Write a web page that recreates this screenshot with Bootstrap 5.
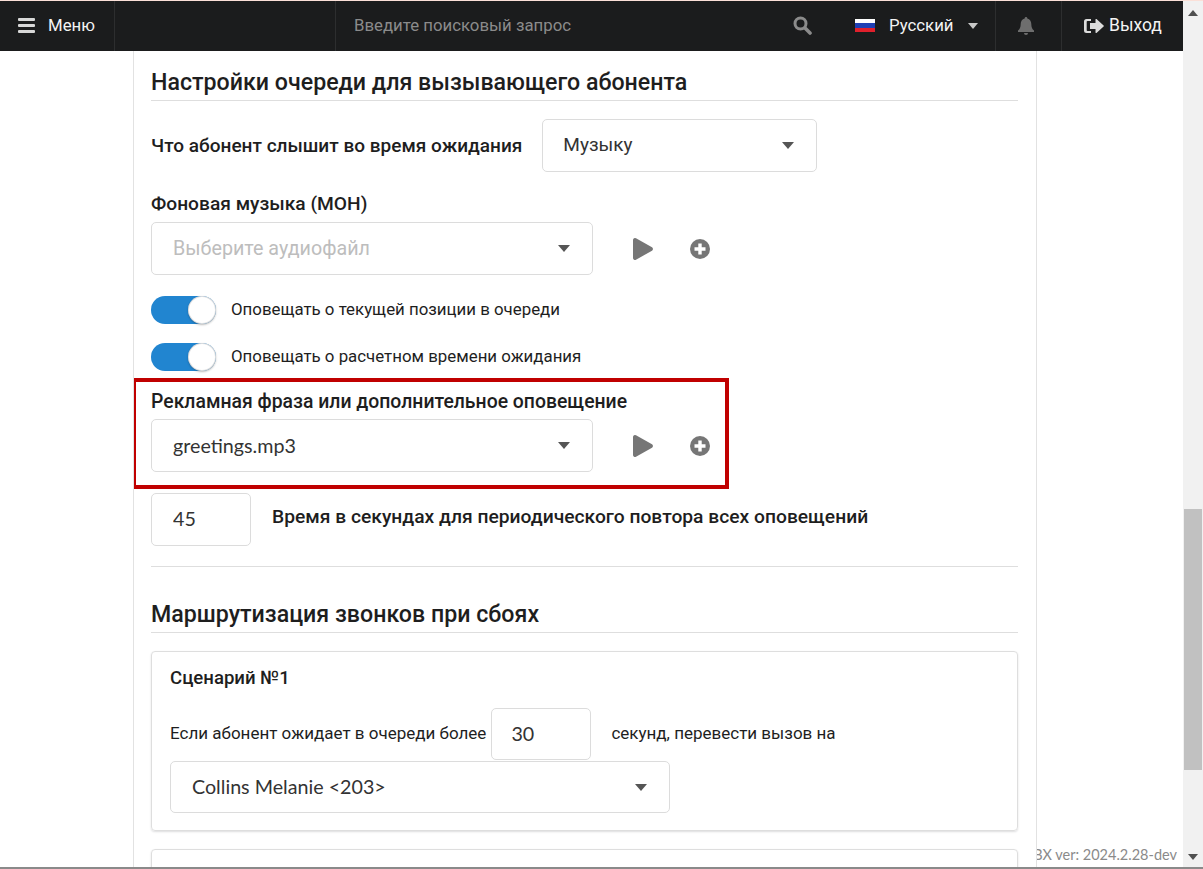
<!DOCTYPE html>
<html lang="ru">
<head>
  <meta charset="UTF-8">
  <meta name="viewport" content="width=device-width, initial-scale=1">
  <title>Настройки очереди</title>
  <link href="https://cdn.jsdelivr.net/npm/bootstrap@5.3.0/dist/css/bootstrap.min.css" rel="stylesheet">
  <style>
    html, body { height: 100%; }
    body { font-family: Roboto, "Liberation Sans", sans-serif; color: #1e1e1e; overflow: hidden; border-top: 1px solid #fbe0d8; border-bottom: 2px solid #8a8a8a; background: #fff; }
    .topbar { height: 50px; background: #1b1c1d; color: #f4f4f4; font-size: 16.8px; flex: none; }
    .topcell { height: 100%; display: flex; align-items: center; border-right: 1px solid #2d2e2f; flex: none; padding-bottom: 1px; }
    .cell-menu { width: 115px; padding-left: 18px; gap: 13px; }
    .cell-gap { width: 221px; }
    .cell-search { width: 505px; padding-left: 18px; color: #8b8b8b; justify-content: space-between; padding-right: 29px; border-right: 0; }
    .cell-lang { width: 155px; padding-left: 14px; border-right: 1px solid #2d2e2f; gap: 14px; }
    .cell-bell { width: 66px; justify-content: center; padding-right: 5px; }
    .cell-exit { flex: 1 1 auto; border-right: 0; padding-left: 22px; gap: 5px; font-size: 17.5px; }
    .flag-ru { width: 20px; height: 13px; background: linear-gradient(#fff 33%, #1f3fb4 33%, #1f3fb4 66%, #e0202c 66%); }
    .caret-down { width: 0; height: 0; border-left: 5.5px solid transparent; border-right: 5.5px solid transparent; border-top: 6px solid #c8c8c8; }
    .side-gutter { width: 133px; flex: none; }
    .main-panel { width: 904px; flex: none; border-left: 1px solid #e2e2e2; border-right: 1px solid #e2e2e2; padding: 18px 18px 0 17px; overflow: hidden; }
    .right-gutter { font-family: Lato, sans-serif; font-size: 14.5px; color: #8a8a8a; white-space: nowrap; overflow: hidden; min-width: 0; padding: 0 6px 1px 0; }
    .fake-scroll { width: 20px; flex: none; background: #f1f1f1; }
    .scroll-thumb { width: 18px; height: 261px; margin: 0 auto; background: #c1c1c1; }
    .arrow-up, .arrow-down { width: 0; height: 0; border-left: 5px solid transparent; border-right: 5px solid transparent; }
    .arrow-up { border-bottom: 6px solid #505050; margin: 9px auto 0; }
    .arrow-down { border-top: 6px solid #505050; margin: 0 auto 7px; }
    .scroll-rest { height: 493px; }
    .sec-title { font-size: 23.2px; font-weight: 500; line-height: 26px; margin: 0; padding-bottom: 5px; border-bottom: 1px solid #dedede; }
    .fld-label { font-size: 19.2px; font-weight: 500; line-height: 22px; }
    .fld-first { font-size: 19.05px; }
    .fld-wide { font-size: 19.4px; }
    .fld-raised { font-size: 19.25px; padding-bottom: 5px; }
    .dd-select, .num-input { font-family: Lato, Roboto, sans-serif; height: 53px; font-size: 19.7px; color: #333; border: 1px solid #dcdcdc; border-radius: 5px; box-shadow: none; }
    .dd-select { padding: 0 40px 0 21px; background-position: right 22px center; background-size: 12px 7px; background-image: url("data:image/svg+xml,%3Csvg xmlns='http://www.w3.org/2000/svg' viewBox='0 0 12 7'%3E%3Cpath fill='%23555' d='M0 0h12L6 7z'/%3E%3C/svg%3E"); }
    .dd-empty { color: #bdbdbd; font-family: Roboto, sans-serif; }
    .dd-rus { font-family: Roboto, sans-serif; font-size: 19px; padding-left: 20px; }
    .w-queue { width: 275px; }
    .w-file { width: 442px; }
    .w-dest { width: 500px; height: 52px; }
    .num-input { width: 100px; padding: 0 21px 2px; }
    .num-small { height: 52px; margin: 0 20px 0 5px; padding-left: 19px; }
    .act-icon { color: #767676; }
    .tgl { display: block; width: 65px; height: 28px; border-radius: 14px; background: #2185d0; position: relative; flex: none; }
    .tgl::after { content: ""; position: absolute; right: 0; top: 0; width: 28px; height: 28px; border-radius: 50%; background: #fff; box-shadow: 0 1px 2px rgba(34,36,38,.3), inset 0 0 0 1px rgba(34,36,38,.15); }
    .tgl-text { font-size: 16.85px; }
    .red-frame { position: absolute; left: -19px; top: -13px; width: 597px; height: 111px; border: 4px solid #c00000; pointer-events: none; }
    .rule-line { border-top: 1px solid #dedede; }
    .scen-card { border: 1px solid #dedede; border-radius: 4px; box-shadow: 0 1px 2px rgba(34,36,38,.15); padding: 15px 18px 17px; }
    .scen-title { font-size: 18.6px; font-weight: 500; line-height: 22px; }
    .scen-text { font-size: 17px; padding-bottom: 1px; }
  </style>
</head>
<body class="d-flex">

<div class="flex-grow-1 d-flex flex-column" style="min-width:0">
  <div class="topbar d-flex align-items-center">
    <div class="topcell cell-menu">
      <svg width="17" height="15" viewBox="0 0 17 15" fill="#d8d8d8"><rect y="0" width="17" height="3" rx="1"/><rect y="6" width="17" height="3" rx="1"/><rect y="12" width="17" height="3" rx="1"/></svg>
      <span>Меню</span>
    </div>
    <div class="topcell cell-gap"></div>
    <div class="topcell cell-search">
      <span>Введите поисковый запрос</span>
      <svg width="19" height="19" viewBox="0 0 19 19" fill="none" stroke="#8b8b8b"><circle cx="7.5" cy="7.5" r="5.5" stroke-width="3"/><path d="M12 12l5 5" stroke-width="3.6" stroke-linecap="round"/></svg>
    </div>
    <div class="topcell cell-lang">
      <span class="flag-ru"></span>
      <span>Русский</span>
      <span class="caret-down"></span>
    </div>
    <div class="topcell cell-bell">
      <svg width="16" height="18" viewBox="0 0 16 18" fill="#6e6e6e"><path d="M8 0a1.3 1.3 0 0 1 1.3 1.4C12 2 13.3 4.2 13.3 7c0 3.6 1 5 2.7 6.6V15H0v-1.4C1.7 12 2.7 10.600 2.700 7c0-2.800 1.300-5 4-5.600A1.300 1.300 0 0 1 8 0z"/><path d="M6 16h4a2 2 0 0 1-4 0z"/></svg>
    </div>
    <div class="topcell cell-exit">
      <svg width="20" height="16" viewBox="0 0 20 16" fill="#dcdcdc"><path d="M2.500 1H7v2H3.500a.8.800 0 0 0-.8.800v8.400a.8.800 0 0 0 .8.800H7v2H2.500A2.500 2.500 0 0 1 0 12.500v-9A2.500 2.500 0 0 1 2.500 1z"/><path d="M11.500 1.500a.6.600 0 0 1 1 -.4L19.600 7.500a.7.700 0 0 1 0 1L12.500 14.900a.6.600 0 0 1-1-.4V11H6V5h5.500z"/></svg>
      <span>Выход</span>
    </div>
  </div>

  <div class="flex-grow-1 d-flex" style="min-height:0">
    <div class="side-gutter"></div>
    <div class="main-panel">
      <h2 class="sec-title">Настройки очереди для вызывающего абонента</h2>

      <div class="d-flex align-items-center" style="gap:20px;margin-top:18px">
        <span class="fld-label fld-first">Что абонент слышит во время ожидания</span>
        <select class="form-select dd-select dd-rus w-queue"><option>Музыку</option></select>
      </div>

      <div class="fld-label" style="margin-top:21px;margin-bottom:7px">Фоновая музыка (МОН)</div>
      <div class="d-flex align-items-center">
        <select class="form-select dd-select dd-empty w-file"><option>Выберите аудиофайл</option></select>
        <svg class="act-icon" style="margin-left:40px" width="20" height="22" viewBox="0 0 20 22" fill="currentColor"><path d="M0 2a2 2 0 0 1 3-1.700l16 9a2 2 0 0 1 0 3.400l-16 9A2 2 0 0 1 0 20z"/></svg>
        <svg class="act-icon" style="margin-left:37px" width="20" height="20" viewBox="0 0 20 20"><circle cx="10" cy="10" r="10" fill="currentColor"/><path d="M10 4.500v11M4.500 10h11" stroke="#fff" stroke-width="3.400"/></svg>
      </div>

      <div class="d-flex align-items-center" style="gap:15px;margin-top:21px">
        <span class="tgl"></span><span class="tgl-text">Оповещать о текущей позиции в очереди</span>
      </div>
      <div class="d-flex align-items-center" style="gap:15px;margin-top:19px">
        <span class="tgl"></span><span class="tgl-text">Оповещать о расчетном времени ожидания</span>
      </div>

      <div class="position-relative" style="margin-top:20px">
        <span class="red-frame"></span>
        <div class="fld-label fld-wide" style="margin-bottom:6px">Рекламная фраза или дополнительное оповещение</div>
        <div class="d-flex align-items-center">
          <select class="form-select dd-select w-file"><option>greetings.mp3</option></select>
          <svg class="act-icon" style="margin-left:40px" width="20" height="22" viewBox="0 0 20 22" fill="currentColor"><path d="M0 2a2 2 0 0 1 3-1.700l16 9a2 2 0 0 1 0 3.400l-16 9A2 2 0 0 1 0 20z"/></svg>
          <svg class="act-icon" style="margin-left:37px" width="20" height="20" viewBox="0 0 20 20"><circle cx="10" cy="10" r="10" fill="currentColor"/><path d="M10 4.500v11M4.500 10h11" stroke="#fff" stroke-width="3.400"/></svg>
        </div>
      </div>

      <div class="d-flex align-items-center" style="gap:21px;margin-top:21px">
        <input class="form-control num-input" value="45">
        <span class="fld-label fld-raised">Время в секундах для периодического повтора всех оповещений</span>
      </div>

      <div class="rule-line" style="margin-top:20px"></div>

      <h2 class="sec-title" style="margin-top:34px">Маршрутизация звонков при сбоях</h2>

      <div class="scen-card" style="margin-top:18px">
        <div class="scen-title">Сценарий №1</div>
        <div class="d-flex align-items-center scen-text" style="margin-top:19px">
          <span>Если абонент ожидает в очереди более</span>
          <input class="form-control num-input num-small" value="30">
          <span>секунд, перевести вызов на</span>
        </div>
        <select class="form-select dd-select w-dest"><option>Collins Melanie &lt;203&gt;</option></select>
      </div>

      <div class="scen-card" style="margin-top:18px;height:80px"></div>
    </div>
    <div class="right-gutter flex-grow-1 d-flex align-items-end justify-content-end">
      <span>MikoPBX ver: 2024.2.28-dev</span>
    </div>
  </div>
</div>

<div class="fake-scroll d-flex flex-column">
  <div class="arrow-up"></div>
  <div class="scroll-rest"></div>
  <div class="scroll-thumb"></div>
  <div class="flex-grow-1"></div>
  <div class="arrow-down"></div>
</div>

<script src="https://cdn.jsdelivr.net/npm/bootstrap@5.3.0/dist/js/bootstrap.bundle.min.js"></script>
</body>
</html>
